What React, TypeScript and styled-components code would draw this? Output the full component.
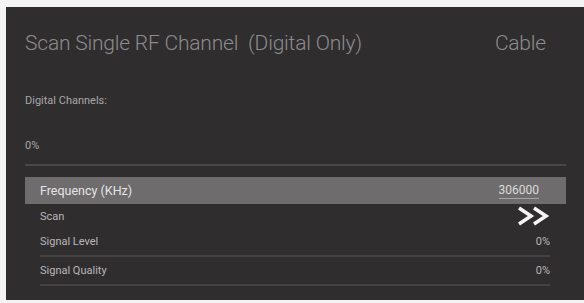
import React from "react";
import styled, { createGlobalStyle } from "styled-components";

const Global = createGlobalStyle`
  html, body { margin: 0; padding: 0; background: #f4f4f4; }
  body { font-family: Roboto, "Liberation Sans", sans-serif; }
`;

const Page = styled.div`
  width: 584px;
  height: 303px;
  padding: 7px 0 3px 6px;
  box-sizing: border-box;
  overflow: hidden;
`;

const Panel = styled.div`
  width: 578px;
  height: 293px;
  background: #302d2f;
  box-sizing: border-box;
  padding: 0 18px 0 19px;
  display: flex;
  flex-direction: column;
`;

const Header = styled.div`
  display: flex;
  justify-content: space-between;
  align-items: center;
  height: 32px;
  margin-top: 20px;
  padding-right: 20px;
`;

const Title = styled.div`
  font-size: 21px;
  font-weight: 300;
  color: #8d8b8d;
  letter-spacing: -0.2px;
  white-space: pre;
`;

const Small = styled.div<{ $top: number }>`
  font-size: 11px;
  color: #a9a7a9;
  margin-top: ${(p) => p.$top}px;
  height: 12px;
  line-height: 12px;
`;

const Divider = styled.div`
  height: 2px;
  background: #4a4749;
  margin-top: 12px;
  width: 541px;
`;

const List = styled.div`
  width: 541px;
  margin-top: 11px;
  display: flex;
  flex-direction: column;
`;

const Row = styled.div<{ $active?: boolean; $line?: boolean; $h: number }>`
  display: flex;
  justify-content: space-between;
  align-items: center;
  height: ${(p) => p.$h}px;
  box-sizing: border-box;
  margin: ${(p) => (p.$active ? "0" : "0 16px 0 15px")};
  padding: ${(p) => (p.$active ? "0 27px 0 15px" : "0")};
  background: ${(p) => (p.$active ? "#6f6c6e" : "transparent")};
  border-bottom: ${(p) => (p.$line ? "2px solid #444144" : "none")};
  font-size: ${(p) => (p.$active ? "12.5px" : "11px")};
  color: ${(p) => (p.$active ? "#e6e4e6" : "#b9b7b9")};
`;

const Value = styled.span<{ $under?: boolean }>`
  font-size: ${(p) => (p.$under ? "12px" : "inherit")};
  color: ${(p) => (p.$under ? "#dcdadc" : "#b9b7b9")};
  border-bottom: ${(p) => (p.$under ? "1px solid #a5a3a5" : "none")};
  padding-bottom: 1px;
`;

const Chevrons = () => (
  <svg width="33" height="20" viewBox="0 0 33 20">
    <path d="M2 2 L14 10 L2 18" fill="none" stroke="#f4f4f4" strokeWidth="3.6" strokeLinejoin="miter" />
    <path d="M17 2 L29 10 L17 18" fill="none" stroke="#f4f4f4" strokeWidth="3.6" strokeLinejoin="miter" />
  </svg>
);

export default function App() {
  return (
    <>
      <Global />
      <Page>
        <Panel>
          <Header>
            <Title>Scan Single RF Channel  (Digital Only)</Title>
            <Title>Cable</Title>
          </Header>
          <Small $top={36}>Digital Channels:</Small>
          <Small $top={33}>0%</Small>
          <Divider />
          <List>
            <Row $active $h={27}>
              <span>Frequency (KHz)</span>
              <Value $under>306000</Value>
            </Row>
            <Row $h={24}>
              <span>Scan</span>
              <Chevrons />
            </Row>
            <Row $line $h={29}>
              <span>Signal Level</span>
              <Value>0%</Value>
            </Row>
            <Row $line $h={29}>
              <span>Signal Quality</span>
              <Value>0%</Value>
            </Row>
          </List>
        </Panel>
      </Page>
    </>
  );
}
